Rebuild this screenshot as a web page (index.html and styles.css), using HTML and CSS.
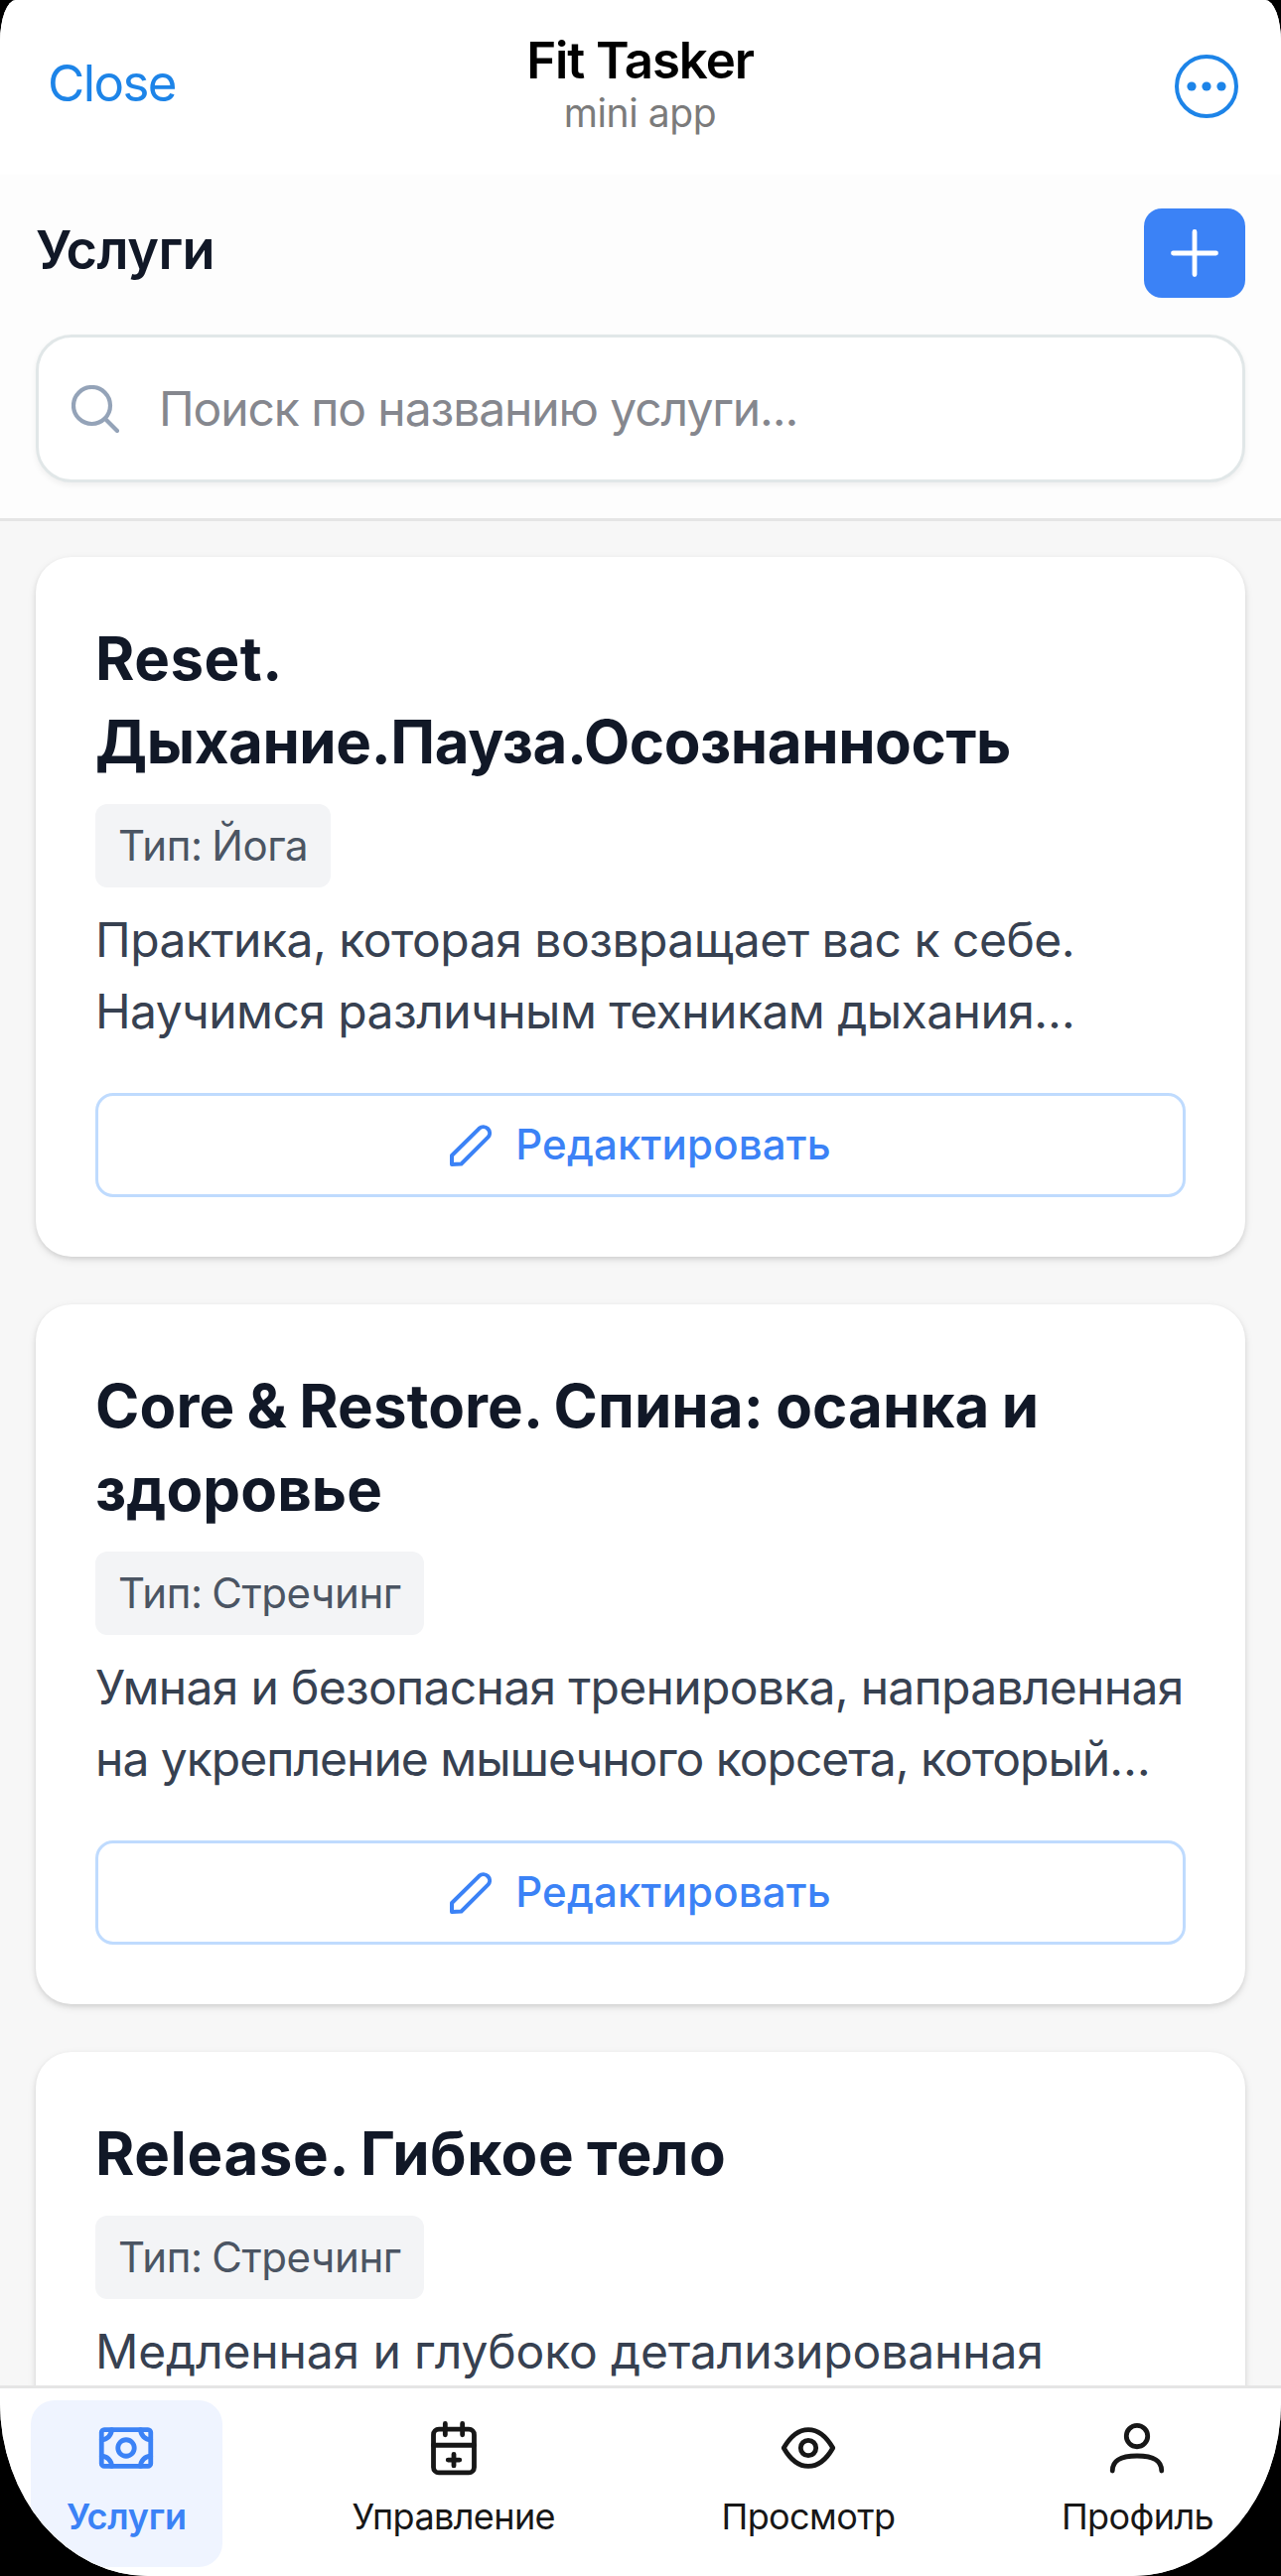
FILE: index.html
```html
<!DOCTYPE html>
<html lang="ru">
<head>
    <meta charset="UTF-8">
    <meta name="viewport" content="width=device-width, initial-scale=1.0">
    <title>Fit Tasker</title>
    <link rel="stylesheet" href="styles.css">
</head>
<body>
    <div class="app">
        <header class="topbar">
            <button class="close-btn">Close</button>
            <div class="app-name">
                <div class="app-title">Fit Tasker</div>
                <div class="app-subtitle">mini app</div>
            </div>
            <button class="more-btn" aria-label="More">
                <svg viewBox="0 0 64 64" width="64" height="64">
                    <circle cx="32" cy="32" r="30" fill="none" stroke="currentColor" stroke-width="4"/>
                    <circle cx="17" cy="32" r="4.6" fill="currentColor"/>
                    <circle cx="32" cy="32" r="4.6" fill="currentColor"/>
                    <circle cx="47" cy="32" r="4.6" fill="currentColor"/>
                </svg>
            </button>
        </header>

        <section class="page-header">
            <div class="heading-row">
                <h1>Услуги</h1>
                <button class="add-btn" aria-label="Добавить">
                    <svg viewBox="0 0 48 48" width="48" height="48">
                        <path d="M24 2.500V45.500M2.500 24H45.500"/>
                    </svg>
                </button>
            </div>
            <label class="search">
                <svg class="search-icon" viewBox="0 0 48 48" width="48" height="48">
                    <circle cx="20.500" cy="20.500" r="18.500"/>
                    <path d="M34 34L46 46"/>
                </svg>
                <input type="text" placeholder="Поиск по названию услуги...">
            </label>
        </section>

        <main class="services">
            <article class="card">
                <h2 class="tight">Reset. Дыхание.Пауза.Осознанность</h2>
                <span class="tag">Тип: Йога</span>
                <p>Практика, которая возвращает вас к себе.<br>Научимся различным техникам дыхания…</p>
                <button class="edit-btn">
                    <svg viewBox="0 0 42 42" width="42" height="42">
                        <path d="M2 40V31L29.500 3.800a6.300 6.300 0 0 1 8.900 8.900L11.500 39.500Z"/>
                    </svg>
                    <span>Редактировать</span>
                </button>
            </article>

            <article class="card">
                <h2>Core &amp; Restore. Спина: осанка и здоровье</h2>
                <span class="tag">Тип: Стречинг</span>
                <p class="tight">Умная и безопасная тренировка, направленная<br>на укрепление мышечного корсета, который…</p>
                <button class="edit-btn">
                    <svg viewBox="0 0 42 42" width="42" height="42">
                        <path d="M2 40V31L29.500 3.800a6.300 6.300 0 0 1 8.900 8.900L11.500 39.500Z"/>
                    </svg>
                    <span>Редактировать</span>
                </button>
            </article>

            <article class="card">
                <h2 class="loose">Release. Гибкое тело</h2>
                <span class="tag">Тип: Стречинг</span>
                <p class="loose">Медленная и глубоко детализированная</p>
            </article>
        </main>

        <nav class="tabbar">
            <a class="tab active">
                <svg viewBox="0 0 24 24" width="66" height="66">
                    <rect x="3" y="5.300" width="18" height="13.400" rx="1"/>
                    <circle cx="12" cy="12" r="3"/>
                    <path d="M6.700 5.300A3.700 3.700 0 0 1 3 9M17.300 5.300A3.700 3.700 0 0 0 21 9M6.700 18.700A3.700 3.700 0 0 0 3 15M17.300 18.700A3.700 3.700 0 0 1 21 15"/>
                </svg>
                <span>Услуги</span>
            </a>
            <a class="tab">
                <svg viewBox="0 0 24 24" width="66" height="66">
                    <rect x="4.550" y="5.150" width="14.900" height="15.900" rx="2"/>
                    <path d="M8.850 3.100v4.100M15.150 3.100v4.100M4.550 11h14.900M12 14.300v4.200M9.900 16.400h4.200"/>
                </svg>
                <span>Управление</span>
            </a>
            <a class="tab">
                <svg viewBox="0 0 24 24" width="66" height="66">
                    <path d="M3 12C5.500 7.600 8.700 5.300 12 5.300S18.500 7.600 21 12C18.500 16.400 15.300 18.700 12 18.700S5.500 16.400 3 12Z"/>
                    <circle cx="12" cy="12" r="2.800"/>
                </svg>
                <span>Просмотр</span>
            </a>
            <a class="tab">
                <svg viewBox="0 0 24 24" width="66" height="66">
                    <circle cx="12" cy="7.650" r="3.900"/>
                    <path d="M3 20.400C3 16.300 6.300 14.900 12 14.900S21 16.300 21 20.400"/>
                </svg>
                <span>Профиль</span>
            </a>
        </nav>
    </div>
</body>
</html>
```
FILE: styles.css
```css
* {
    box-sizing: border-box;
}

body {
    margin: 0;
    background: #000;
    font-family: Inter, "Noto Sans", sans-serif;
}

button {
    font-family: inherit;
    background: none;
    border: none;
    padding: 0;
}

.app {
    height: 2595px;
    display: flex;
    flex-direction: column;
    overflow: hidden;
    background: #f7f7f7;
    border-radius: 16px 16px 150px 150px / 42px 42px 175px 175px;
}

.topbar {
    height: 176px;
    flex-shrink: 0;
    display: grid;
    grid-template-columns: 1fr auto 1fr;
    align-items: start;
    padding: 0 43px 0 48px;
    background: #fff;
}

.close-btn {
    justify-self: start;
    margin-top: 53px;
    font-size: 51px;
    line-height: 62px;
    letter-spacing: -1.6px;
    color: #1d84e8;
}

.app-name {
    padding-top: 30px;
    margin-left: -6px;
    text-align: center;
}

.app-title {
    font-size: 51px;
    line-height: 62px;
    font-weight: 600;
    letter-spacing: -1.1px;
    color: #000;
}

.app-subtitle {
    font-size: 39px;
    line-height: 44px;
    letter-spacing: -0.4px;
    color: #7b7b7b;
}

.more-btn {
    justify-self: end;
    margin-top: 55px;
    color: #1d84e8;
}

.more-btn svg {
    display: block;
}

.page-header {
    height: 349px;
    flex-shrink: 0;
    padding: 34px 36px 0;
    background: #fdfdfd;
    border-bottom: 3px solid #e5e5e5;
}

.heading-row {
    display: flex;
    justify-content: space-between;
    align-items: flex-start;
    height: 127px;
}

h1 {
    margin: 0;
    font-size: 54px;
    line-height: 84px;
    font-weight: 600;
    letter-spacing: -0.5px;
    color: #111827;
}

.add-btn {
    width: 102px;
    height: 90px;
    display: flex;
    align-items: center;
    justify-content: center;
    background: #3b82f6;
    border-radius: 18px;
}

.add-btn svg {
    fill: none;
    stroke: #fff;
    stroke-width: 4.8;
    stroke-linecap: round;
}

.search {
    height: 149px;
    display: flex;
    align-items: center;
    gap: 40px;
    padding: 0 33px;
    background: #fff;
    border: 3px solid #e1e7e8;
    border-radius: 36px;
    box-shadow: 0 3px 6px rgba(0, 0, 0, 0.06);
}

.search-icon {
    fill: none;
    stroke: #94a3b8;
    stroke-width: 4.2;
    stroke-linecap: round;
}

.search input {
    flex: 1;
    border: none;
    outline: none;
    padding: 0;
    background: none;
    font-family: inherit;
    font-size: 48px;
    letter-spacing: -1.1px;
    color: #111827;
}

.search input::placeholder {
    color: #85878e;
    opacity: 1;
}

.services {
    flex: 1;
    min-height: 0;
    overflow: hidden;
    display: flex;
    flex-direction: column;
    gap: 48px;
    padding: 36px 36px 0;
}

.card {
    height: 705px;
    flex-shrink: 0;
    display: flex;
    flex-direction: column;
    align-items: flex-start;
    padding: 60px;
    background: #fff;
    border-radius: 36px;
    box-shadow: 0 3px 9px rgba(0, 0, 0, 0.1), 0 2px 4px rgba(0, 0, 0, 0.08);
}

.card h2 {
    margin: 0;
    font-size: 60px;
    line-height: 84px;
    font-weight: 700;
    letter-spacing: 0.1px;
    word-spacing: -2px;
    color: #111827;
}

.card h2.tight {
    letter-spacing: -0.4px;
}

.card h2.tight::first-line {
    letter-spacing: 0.5px;
}

.card h2.loose {
    letter-spacing: 0.6px;
}

.tag {
    margin-top: 21px;
    padding: 12px 23px;
    font-size: 42px;
    line-height: 60px;
    letter-spacing: -0.4px;
    word-spacing: -2px;
    color: #4b5563;
    background: #f3f4f6;
    border-radius: 12px;
}

.card p {
    margin: 17px 0 46px;
    font-size: 48px;
    line-height: 72px;
    letter-spacing: -0.55px;
    color: #374151;
    white-space: nowrap;
}

.card p::first-line {
    letter-spacing: -0.5px;
}

.card p.tight {
    letter-spacing: -1px;
}

.card p.tight::first-line {
    letter-spacing: -0.7px;
}

.card p.loose::first-line {
    letter-spacing: -0.15px;
}

.edit-btn {
    width: 100%;
    height: 105px;
    display: flex;
    align-items: center;
    justify-content: center;
    gap: 24px;
    border: 3px solid #bfdbfe;
    border-radius: 18px;
    font-size: 42px;
    font-weight: 500;
    letter-spacing: 0.2px;
    color: #3b82f6;
}

.edit-btn svg {
    fill: none;
    stroke: currentColor;
    stroke-width: 4;
    stroke-linejoin: round;
}

.edit-btn span {
    padding-bottom: 3px;
}

.tabbar {
    height: 192px;
    flex-shrink: 0;
    display: flex;
    justify-content: space-between;
    padding: 12px 31px 9px;
    background: #fff;
    border-top: 3px solid #e5e5e5;
}

.tab {
    display: flex;
    flex-direction: column;
    align-items: center;
    padding: 15px 37px 0;
    font-size: 36px;
    line-height: 48px;
    letter-spacing: -0.6px;
    color: #171717;
    border-radius: 24px;
}

.tab svg {
    margin-bottom: 12px;
    fill: none;
    stroke: currentColor;
    stroke-width: 1.75;
    stroke-linecap: round;
    stroke-linejoin: round;
}

.tab.active {
    padding: 15px 36px 0;
    background: #eff4ff;
    color: #3b82f6;
    font-weight: 600;
    letter-spacing: -0.2px;
}
```
